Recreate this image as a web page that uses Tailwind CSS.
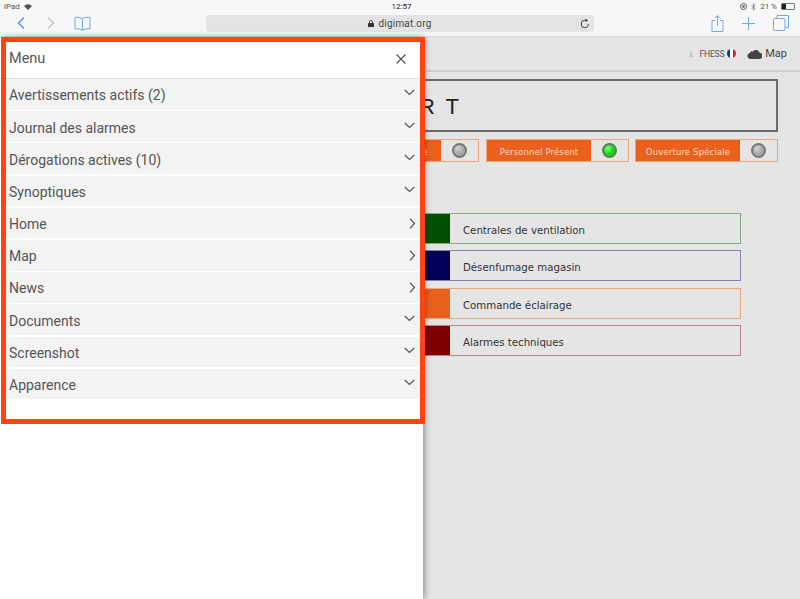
<!DOCTYPE html>
<html lang="fr">

<head>
    <meta charset="UTF-8">
    <title>digimat.org</title>
    <script src="https://cdn.jsdelivr.net/npm/@tailwindcss/browser@4"></script>
</head>

<body class="font-['Roboto',sans-serif]">
    <div class="relative w-[800px] h-[599px] overflow-hidden bg-[#e5e5e5]">

        <!-- safari bar -->
        <div class="h-[37px] bg-[#f7f7f7] border-b border-[#dcdcdc]">
            <div class="flex items-center justify-between h-[13px] px-1 text-[8px] text-[#555]">
                <div class="flex items-center gap-1 w-[200px]">
                    <span>iPad</span>
                    <svg width="8" height="6" viewBox="0 0 8 6"><path d="M4 6 0 2a5.600 5.600 0 0 1 8 0z" fill="#555"/></svg>
                </div>
                <span class="ml-[3px] text-[#222]">12:57</span>
                <div class="flex items-center justify-end gap-1 w-[200px]">
                    <svg width="7" height="7" viewBox="0 0 7 7"><circle cx="3.500" cy="3.500" r="3" fill="none" stroke="#555"/><circle cx="3.500" cy="3.500" r="1.300" fill="#555"/></svg>
                    <svg width="5" height="8" viewBox="0 0 5 8"><path d="M.5 2 4 5.500 2.500 7.500V.5L4 2.500.5 6" fill="none" stroke="#777" stroke-width=".7"/></svg>
                    <span>21 %</span>
                    <div class="flex items-center w-[14px] h-[7px] border border-[#777] rounded-[1px] mr-px">
                        <div class="w-[4px] h-full bg-[#222]"></div>
                    </div>
                </div>
            </div>
            <div class="flex items-center h-[20px]">
                <div class="flex items-center w-[206px] pl-[16px]">
                    <svg width="10" height="14" viewBox="0 0 10 14"><path d="M8 1.500 2.500 7 8 12.500" fill="none" stroke="#4d94f0" stroke-width="1.400"/></svg>
                    <svg class="ml-[20px]" width="10" height="14" viewBox="0 0 10 14"><path d="M2 1.500 7.500 7 2 12.500" fill="none" stroke="#c4c4c6" stroke-width="1.400"/></svg>
                    <svg class="ml-[18px]" width="17" height="15" viewBox="0 0 17 15"><path d="M8.500 3C7 1.200 3.500 1 1 1.500V13c2.500-.5 6-.3 7.500 1.500C10 12.700 13.500 12.500 16 13V1.500C13.500 1 10 1.200 8.500 3zM8.500 3v11.500" fill="none" stroke="#6fa8f2" stroke-width="1"/></svg>
                </div>
                <div class="relative flex items-center justify-center w-[388px] h-[17px] rounded-[4px] bg-[#e4e4e6] text-[10px] text-[#444] tracking-[.2px]">
                    <svg class="mr-[4px]" width="6" height="7" viewBox="0 0 6 7"><path d="M1.500 3V2a1.500 1.500 0 0 1 3 0v1" fill="none" stroke="#333" stroke-width=".8"/><rect y="3" width="6" height="4" rx=".6" fill="#333"/></svg>
                    <span>digimat.org</span>
                    <svg class="absolute right-[4px] top-[3px]" width="10" height="11" viewBox="0 0 10 11"><path d="M8.500 6a3.700 3.700 0 1 1-3.700-3.700H6.500" fill="none" stroke="#444" stroke-width="1"/><path d="M5.500.5 8 2.300 5.500 4.200z" fill="#444"/></svg>
                </div>
                <div class="flex items-center justify-end flex-1 pr-[11px] gap-[18px]">
                    <svg width="13" height="17" viewBox="0 0 13 17"><path d="M4 5.500H1v11h11v-11H9M6.500 11V.8M3.800 3.300 6.500.6l2.700 2.700" fill="none" stroke="#6fa8f2" stroke-width="1"/></svg>
                    <svg width="13" height="13" viewBox="0 0 13 13"><path d="M6.500 0v13M0 6.500h13" stroke="#6fa8f2" stroke-width="1"/></svg>
                    <svg width="16" height="16" viewBox="0 0 16 16"><rect x=".5" y="3.500" width="11.500" height="12" rx="1" fill="none" stroke="#6fa8f2"/><path d="M4 3V.5h11.500v12H12.500" fill="none" stroke="#6fa8f2"/></svg>
                </div>
            </div>
        </div>

        <!-- page behind the menu -->
        <div class="h-[35px] flex items-center justify-end gap-[11px] pr-[13px] border-b-2 border-[#cfcfcf] font-['Liberation_Sans',sans-serif]">
            <div class="flex items-center gap-[3px] text-[8.500px] tracking-[-.2px] text-[#555] font-['Roboto',sans-serif]">
                <svg width="6" height="7" viewBox="0 0 6 7"><path d="M3 0 5 7H1z" fill="#c6c6c6"/></svg>
                <span class="ml-[3px] mt-[1px]">FHESS</span>
                <div class="flex w-[9px] h-[9px] rounded-full overflow-hidden">
                    <div class="flex-1 bg-[#1f2f8f]"></div>
                    <div class="flex-1 bg-white"></div>
                    <div class="flex-1 bg-[#d6202c]"></div>
                </div>
            </div>
            <div class="flex items-center gap-[3px] text-[11px] text-[#444] font-['Roboto',sans-serif]">
                <svg width="15" height="11" viewBox="0 0 15 11"><path d="M3.200 11a3 3 0 0 1-.5-5.900A2.600 2.600 0 0 1 6 3.400 3.600 3.600 0 0 1 12.300 4.600 3.200 3.200 0 0 1 11.800 11z" fill="#444"/></svg>
                <span class="mt-[1px]">Map</span>
            </div>
        </div>

        <div class="w-[778px] font-['DejaVu_Sans',sans-serif]">
            <div class="flex items-center mt-[7px] h-[53px] pt-[1px] border-2 border-[#6b6b6b] pl-[417px] text-[22px] tracking-[2.500px] text-[#222] font-['Liberation_Sans',sans-serif]">R T</div>

            <div class="flex justify-end gap-[6px] mt-[7px] text-[8.500px] tracking-[.15px] text-[#f6d9c8]">
                <div class="flex w-[143px] h-[23px] mr-[1px] border border-[#eda57e]">
                    <div class="flex flex-1 items-center justify-end pt-[3px] pr-[13px] bg-[#e9611d]">Alarme Générale</div>
                    <div class="flex items-center justify-center w-[37px]"><div class="w-[15px] h-[15px] rounded-full bg-[radial-gradient(circle_at_35%_30%,#d4d4d4,#a4a4a4_60%)] border-2 border-[#777]"></div></div>
                </div>
                <div class="flex w-[143px] h-[23px] border border-[#eda57e]">
                    <div class="flex flex-1 items-center justify-center pt-[3px] bg-[#e9611d]">Personnel Présent</div>
                    <div class="flex items-center justify-center w-[37px]"><div class="w-[15px] h-[15px] rounded-full bg-[radial-gradient(circle_at_35%_30%,#8cf58c,#0ddc0d_55%)] border-2 border-[#5d7a5d]"></div></div>
                </div>
                <div class="flex w-[143px] h-[23px] border border-[#eda57e]">
                    <div class="flex flex-1 items-center justify-center pt-[3px] bg-[#e9611d]">Ouverture Spéciale</div>
                    <div class="flex items-center justify-center w-[37px]"><div class="w-[15px] h-[15px] rounded-full bg-[radial-gradient(circle_at_35%_30%,#d4d4d4,#a4a4a4_60%)] border-2 border-[#777]"></div></div>
                </div>
            </div>

            <div class="flex flex-col gap-[6.400px] w-[741px] mt-[51px] text-[10.200px] text-[#333]">
                <div class="flex items-center h-[31px] border border-[#86aa86]">
                    <div class="w-[449px] h-full bg-[#005000]"></div>
                    <span class="ml-[13px] mt-[4px]">Centrales de ventilation</span>
                </div>
                <div class="flex items-center h-[31px] border border-[#8484b4]">
                    <div class="w-[449px] h-full bg-[#000058]"></div>
                    <span class="ml-[13px] mt-[4px]">Désenfumage magasin</span>
                </div>
                <div class="flex items-center h-[31px] border border-[#eda57e]">
                    <div class="w-[449px] h-full bg-[#e9611d]"></div>
                    <span class="ml-[13px] mt-[4px]">Commande éclairage</span>
                </div>
                <div class="flex items-center h-[31px] border border-[#bb8585]">
                    <div class="w-[449px] h-full bg-[#800000]"></div>
                    <span class="ml-[13px] mt-[4px]">Alarmes techniques</span>
                </div>
            </div>
        </div>

        <!-- side menu -->
        <div class="absolute left-0 top-[37px] bottom-0 w-[423px] pt-[5px] bg-white shadow-[2px_0_6px_rgba(0,0,0,0.35)] text-[14px] text-[#555]">
            <div class="flex items-center justify-between h-[37px] pl-[9px] pr-[17px] border-b border-[#dcdcdc]">
                <span class="-mt-[3px] text-[14.500px]">Menu</span>
                <svg class="-mt-[2px]" width="10" height="10" viewBox="0 0 10 10"><path d="M.5.500l9 9M9.500.500l-9 9" stroke="#555" stroke-width="1.200"/></svg>
            </div>
            <div class="flex flex-col gap-[1.500px] pl-[6px] pr-[3px]">
                <div class="flex items-center justify-between h-[30.700px] pl-[3px] pr-[5px] bg-[#f3f3f3]">
                    <span class="mt-[3px]">Avertissements actifs (2)</span>
                    <svg class="-mt-[3px]" width="11" height="7" viewBox="0 0 11 7"><path d="M.7 1 5.500 5.500 10.300 1" fill="none" stroke="#555" stroke-width="1.200"/></svg>
                </div>
                <div class="flex items-center justify-between h-[30.700px] pl-[3px] pr-[5px] bg-[#f3f3f3]">
                    <span class="mt-[3px]">Journal des alarmes</span>
                    <svg class="-mt-[3px]" width="11" height="7" viewBox="0 0 11 7"><path d="M.7 1 5.500 5.500 10.300 1" fill="none" stroke="#555" stroke-width="1.200"/></svg>
                </div>
                <div class="flex items-center justify-between h-[30.700px] pl-[3px] pr-[5px] bg-[#f3f3f3]">
                    <span class="mt-[3px]">Dérogations actives (10)</span>
                    <svg class="-mt-[3px]" width="11" height="7" viewBox="0 0 11 7"><path d="M.7 1 5.500 5.500 10.300 1" fill="none" stroke="#555" stroke-width="1.200"/></svg>
                </div>
                <div class="flex items-center justify-between h-[30.700px] pl-[3px] pr-[5px] bg-[#f3f3f3]">
                    <span class="mt-[3px]">Synoptiques</span>
                    <svg class="-mt-[3px]" width="11" height="7" viewBox="0 0 11 7"><path d="M.7 1 5.500 5.500 10.300 1" fill="none" stroke="#555" stroke-width="1.200"/></svg>
                </div>
                <div class="flex items-center justify-between h-[30.700px] pl-[3px] pr-[4px] bg-[#f3f3f3]">
                    <span class="mt-[3px]">Home</span>
                    <svg width="7" height="11" viewBox="0 0 7 11"><path d="M1 .7 5.500 5.500 1 10.300" fill="none" stroke="#555" stroke-width="1.200"/></svg>
                </div>
                <div class="flex items-center justify-between h-[30.700px] pl-[3px] pr-[4px] bg-[#f3f3f3]">
                    <span class="mt-[3px]">Map</span>
                    <svg width="7" height="11" viewBox="0 0 7 11"><path d="M1 .7 5.500 5.500 1 10.300" fill="none" stroke="#555" stroke-width="1.200"/></svg>
                </div>
                <div class="flex items-center justify-between h-[30.700px] pl-[3px] pr-[4px] bg-[#f3f3f3]">
                    <span class="mt-[3px]">News</span>
                    <svg width="7" height="11" viewBox="0 0 7 11"><path d="M1 .7 5.500 5.500 1 10.300" fill="none" stroke="#555" stroke-width="1.200"/></svg>
                </div>
                <div class="flex items-center justify-between h-[30.700px] pl-[3px] pr-[5px] bg-[#f3f3f3]">
                    <span class="mt-[3px]">Documents</span>
                    <svg class="-mt-[3px]" width="11" height="7" viewBox="0 0 11 7"><path d="M.7 1 5.500 5.500 10.300 1" fill="none" stroke="#555" stroke-width="1.200"/></svg>
                </div>
                <div class="flex items-center justify-between h-[30.700px] pl-[3px] pr-[5px] bg-[#f3f3f3]">
                    <span class="mt-[3px]">Screenshot</span>
                    <svg class="-mt-[3px]" width="11" height="7" viewBox="0 0 11 7"><path d="M.7 1 5.500 5.500 10.300 1" fill="none" stroke="#555" stroke-width="1.200"/></svg>
                </div>
                <div class="flex items-center justify-between h-[30.700px] pl-[3px] pr-[5px] bg-[#f3f3f3]">
                    <span class="mt-[3px]">Apparence</span>
                    <svg class="-mt-[3px]" width="11" height="7" viewBox="0 0 11 7"><path d="M.7 1 5.500 5.500 10.300 1" fill="none" stroke="#555" stroke-width="1.200"/></svg>
                </div>
            </div>
        </div>

        <!-- red highlight drawn over the menu -->
        <div class="absolute left-[1px] top-[37px] w-[424px] h-[387px] border-[5px] border-[#ff4313]"></div>
    </div>
</body>

</html>
